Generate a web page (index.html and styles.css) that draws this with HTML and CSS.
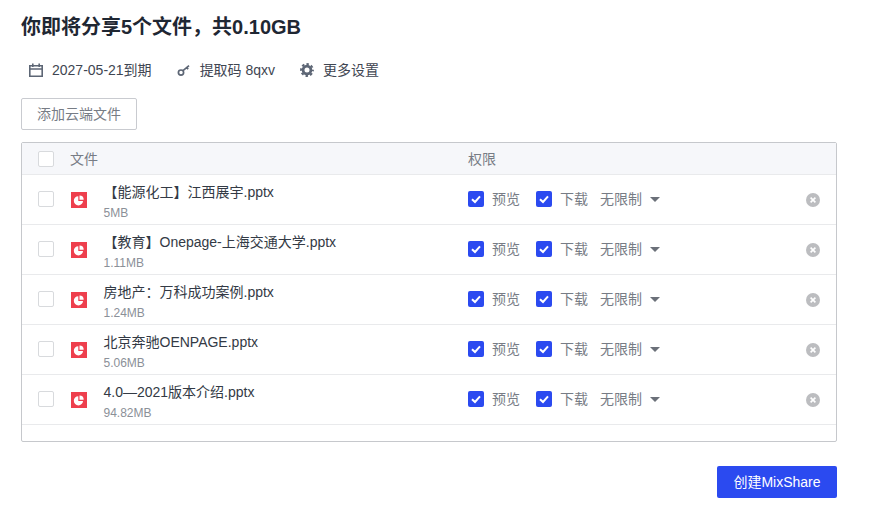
FILE: index.html
```html
<!DOCTYPE html>
<html lang="zh-CN">
<head>
<meta charset="utf-8">
<title>MixShare</title>
<link rel="stylesheet" href="styles.css">
</head>
<body>
<svg class="defs" width="0" height="0" aria-hidden="true">
  <symbol id="check" viewBox="0 0 16 16"><path d="M4 8.2 7 11l5-5.6" fill="none" stroke="#fff" stroke-width="2"/></symbol>
  <symbol id="ppt" viewBox="0 0 16 16"><rect width="16" height="16" fill="#ee3f4d"/><path d="M7.3 4.2v4.7H12A4.6 4.6 0 1 1 7.3 4.2z" fill="#fff"/><path d="M8.5 3.4a4.3 4.3 0 0 1 4.2 4.3H8.5z" fill="#fff"/></symbol>
  <symbol id="close" viewBox="0 0 14 14"><circle cx="7" cy="7" r="7" fill="#bcbdc0"/><path d="M4.6 4.6l4.8 4.8M9.4 4.6 4.6 9.4" stroke="#fff" stroke-width="1.6"/></symbol>
</svg>
<main class="page">
  <h1 class="title">你即将分享5个文件，共0.10GB</h1>
  <div class="meta">
    <span class="meta-item">
      <svg class="meta-icon" viewBox="0 0 14 14"><path d="M.8 2.8h12.4v10.4H.8zM.8 6h12.4M3.8.5v3.5M10.2.5v3.5" fill="none" stroke="#5d6675" stroke-width="1.6"/></svg>
      2027-05-21到期
    </span>
    <span class="meta-item">
      <svg class="meta-icon" viewBox="0 0 14 14"><circle cx="4" cy="9.6" r="2.6" fill="none" stroke="#5d6675" stroke-width="1.7"/><path d="M6 7.6 12 2.6M9.6 4.6l1.6 1.6" fill="none" stroke="#5d6675" stroke-width="1.7"/></svg>
      提取码 8qxv
    </span>
    <span class="meta-item">
      <svg class="meta-icon" viewBox="0 0 14 14"><circle cx="7" cy="7" r="3.9" fill="none" stroke="#5d6675" stroke-width="2.8"/><circle cx="7" cy="7" r="5.9" fill="none" stroke="#5d6675" stroke-width="2" stroke-dasharray="2.5 2.13" stroke-dashoffset="1.25"/></svg>
      更多设置
    </span>
  </div>
  <button class="btn-add" type="button">添加云端文件</button>
  <section class="table">
    <div class="row head">
      <span class="box"></span>
      <span class="col-file">文件</span>
      <span class="col-perm">权限</span>
    </div>
    <div class="row">
      <span class="box"></span>
      <svg class="ppt"><use href="#ppt"/></svg>
      <div class="file"><div class="name">【能源化工】江西展宇.pptx</div><div class="size">5MB</div></div>
      <div class="perm">
        <svg class="tick"><use href="#check"/></svg><span class="lbl">预览</span>
        <svg class="tick tick-2"><use href="#check"/></svg><span class="lbl">下载</span>
        <span class="lbl limit">无限制</span><i class="caret"></i>
      </div>
      <svg class="del"><use href="#close"/></svg>
    </div>
    <div class="row">
      <span class="box"></span>
      <svg class="ppt"><use href="#ppt"/></svg>
      <div class="file"><div class="name">【教育】Onepage-上海交通大学.pptx</div><div class="size">1.11MB</div></div>
      <div class="perm">
        <svg class="tick"><use href="#check"/></svg><span class="lbl">预览</span>
        <svg class="tick tick-2"><use href="#check"/></svg><span class="lbl">下载</span>
        <span class="lbl limit">无限制</span><i class="caret"></i>
      </div>
      <svg class="del"><use href="#close"/></svg>
    </div>
    <div class="row">
      <span class="box"></span>
      <svg class="ppt"><use href="#ppt"/></svg>
      <div class="file"><div class="name">房地产：万科成功案例.pptx</div><div class="size">1.24MB</div></div>
      <div class="perm">
        <svg class="tick"><use href="#check"/></svg><span class="lbl">预览</span>
        <svg class="tick tick-2"><use href="#check"/></svg><span class="lbl">下载</span>
        <span class="lbl limit">无限制</span><i class="caret"></i>
      </div>
      <svg class="del"><use href="#close"/></svg>
    </div>
    <div class="row">
      <span class="box"></span>
      <svg class="ppt"><use href="#ppt"/></svg>
      <div class="file"><div class="name">北京奔驰OENPAGE.pptx</div><div class="size">5.06MB</div></div>
      <div class="perm">
        <svg class="tick"><use href="#check"/></svg><span class="lbl">预览</span>
        <svg class="tick tick-2"><use href="#check"/></svg><span class="lbl">下载</span>
        <span class="lbl limit">无限制</span><i class="caret"></i>
      </div>
      <svg class="del"><use href="#close"/></svg>
    </div>
    <div class="row">
      <span class="box"></span>
      <svg class="ppt"><use href="#ppt"/></svg>
      <div class="file"><div class="name">4.0—2021版本介绍.pptx</div><div class="size">94.82MB</div></div>
      <div class="perm">
        <svg class="tick"><use href="#check"/></svg><span class="lbl">预览</span>
        <svg class="tick tick-2"><use href="#check"/></svg><span class="lbl">下载</span>
        <span class="lbl limit">无限制</span><i class="caret"></i>
      </div>
      <svg class="del"><use href="#close"/></svg>
    </div>
  </section>
  <div class="actions"><button class="btn-create" type="button">创建MixShare</button></div>
</main>
</body>
</html>
```
FILE: styles.css
```css
* { box-sizing: border-box; }
html, body { margin: 0; padding: 0; background: #fff; }
body {
  font-family: "Liberation Sans", "Noto Sans CJK SC", sans-serif;
  color: #333a45;
  overflow: hidden;
}
.defs { position: absolute; }
.page { width: 892px; height: 517px; padding: 13px 0 0 21px; }
.title {
  margin: 0;
  font-size: 20px;
  line-height: 28px;
  font-weight: 600;
  color: #1f2733;
}
.meta {
  display: flex;
  align-items: center;
  margin: 17px 0 0 8px;
  height: 24px;
  font-size: 14px;
  line-height: 24px;
  color: #3f4652;
}
.meta-item { display: flex; align-items: center; margin-right: 25px; }
.meta-icon { width: 14px; height: 14px; margin-right: 9px; }
.btn-add {
  display: block;
  width: 116px;
  height: 32px;
  margin-top: 16px;
  padding: 0 0 2px;
  background: #fff;
  border: 1px solid #c9cbd0;
  border-radius: 2px;
  font: inherit;
  font-size: 14px;
  color: #777c85;
}
.table {
  width: 816px;
  height: 300px;
  margin-top: 12px;
  border: 1px solid #c6c8cc;
  border-radius: 2px;
}
.row {
  display: flex;
  align-items: center;
  height: 50px;
  padding: 0 0 2px 16px;
  border-bottom: 1px solid #e9eaec;
}
.row.head {
  height: 32px;
  padding-bottom: 0;
  background: #f6f7fa;
  font-size: 14px;
  color: #777c85;
}
.box {
  flex: none;
  width: 16px;
  height: 16px;
  background: #fff;
  border: 1px solid #d8dadd;
  border-radius: 2px;
}
.col-file { width: 398px; margin-left: 16px; padding-bottom: 2px; }
.col-perm { width: 60px; padding-bottom: 2px; }
.ppt { flex: none; width: 16px; height: 16px; margin: 2px 0 0 17px; }
.file { flex: none; width: 364.5px; margin: 5px 0 0 16.5px; }
.name { font-size: 14px; line-height: 20px; color: #333a45; }
.size { margin-top: 3px; font-size: 12px; line-height: 16px; color: #8b9098; }
.perm { flex: none; display: flex; align-items: center; width: 338px; font-size: 14px; color: #777c85; }
.tick { flex: none; width: 16px; height: 16px; background: #2b4af0; border-radius: 2px; }
.tick-2 { margin-left: 16px; }
.lbl { margin-left: 8px; line-height: 20px; }
.limit { margin-left: 12px; }
.caret {
  width: 0;
  height: 0;
  margin: 1px 0 0 8px;
  border-left: 5px solid transparent;
  border-right: 5px solid transparent;
  border-top: 5px solid #6b7079;
}
.del { flex: none; width: 14px; height: 14px; margin-top: 2px; }
.actions { display: flex; justify-content: flex-end; width: 816px; margin-top: 24px; }
.btn-create {
  width: 120px;
  height: 32px;
  padding: 0 0 2px;
  background: #2b4af0;
  border: 0;
  border-radius: 2px;
  font: inherit;
  font-size: 14px;
  color: #fff;
}
```
